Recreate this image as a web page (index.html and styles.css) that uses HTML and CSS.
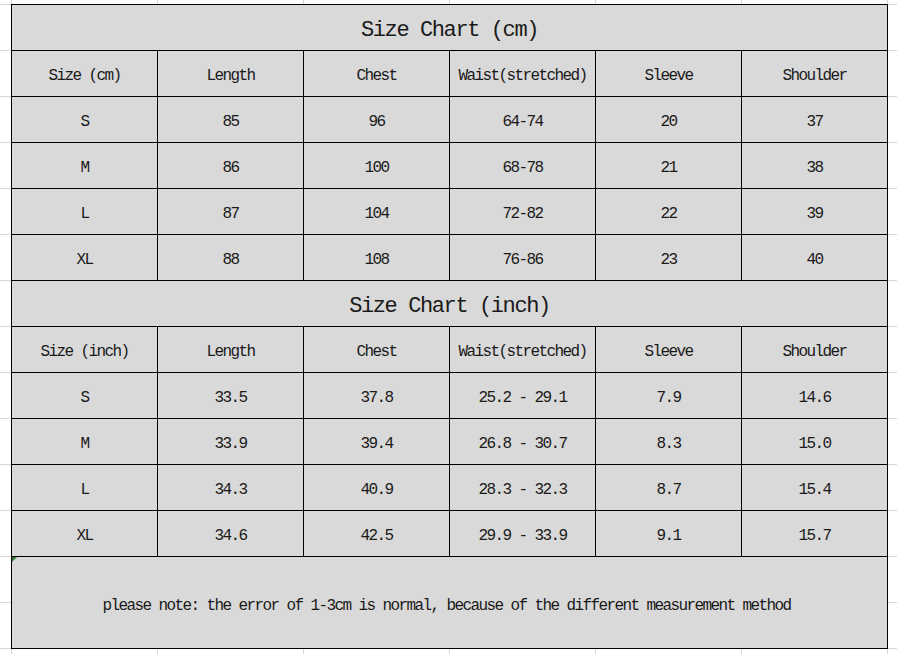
FILE: index.html
```html
<!DOCTYPE html>
<html>
<head>
<meta charset="utf-8">
<link rel="stylesheet" href="styles.css">
</head>
<body>
<div class="sheet">
  <div class="chart">
    <div class="cell title">Size Chart (cm)</div>

    <div class="cell">Size (cm)</div>
    <div class="cell">Length</div>
    <div class="cell">Chest</div>
    <div class="cell">Waist(stretched)</div>
    <div class="cell">Sleeve</div>
    <div class="cell">Shoulder</div>

    <div class="cell">S</div><div class="cell">85</div><div class="cell">96</div><div class="cell">64-74</div><div class="cell">20</div><div class="cell">37</div>
    <div class="cell">M</div><div class="cell">86</div><div class="cell">100</div><div class="cell">68-78</div><div class="cell">21</div><div class="cell">38</div>
    <div class="cell">L</div><div class="cell">87</div><div class="cell">104</div><div class="cell">72-82</div><div class="cell">22</div><div class="cell">39</div>
    <div class="cell">XL</div><div class="cell">88</div><div class="cell">108</div><div class="cell">76-86</div><div class="cell">23</div><div class="cell">40</div>

    <div class="cell title">Size Chart (inch)</div>

    <div class="cell">Size (inch)</div>
    <div class="cell">Length</div>
    <div class="cell">Chest</div>
    <div class="cell">Waist(stretched)</div>
    <div class="cell">Sleeve</div>
    <div class="cell">Shoulder</div>

    <div class="cell">S</div><div class="cell">33.5</div><div class="cell">37.8</div><div class="cell">25.2 - 29.1</div><div class="cell">7.9</div><div class="cell">14.6</div>
    <div class="cell">M</div><div class="cell">33.9</div><div class="cell">39.4</div><div class="cell">26.8 - 30.7</div><div class="cell">8.3</div><div class="cell">15.0</div>
    <div class="cell">L</div><div class="cell">34.3</div><div class="cell">40.9</div><div class="cell">28.3 - 32.3</div><div class="cell">8.7</div><div class="cell">15.4</div>
    <div class="cell">XL</div><div class="cell">34.6</div><div class="cell">42.5</div><div class="cell">29.9 - 33.9</div><div class="cell">9.1</div><div class="cell">15.7</div>

    <div class="cell note"><span class="marker"></span>please note: the error of 1-3cm is normal, because of the different measurement method</div>
  </div>
</div>
</body>
</html>
```

FILE: styles.css
```css
html, body {
  margin: 0;
  padding: 0;
  background: #ffffff;
}

.sheet {
  width: 897px;
  height: 654px;
  box-sizing: border-box;
  padding: 4px 0 0 11px;
  background-color: #ffffff;
  background-image:
    repeating-linear-gradient(to right, #d6d6d6 0 1px, transparent 1px 146px),
    repeating-linear-gradient(to bottom, #d6d6d6 0 1px, transparent 1px 46px);
  background-position: 11px 0, 0 4px;
  overflow: hidden;
}

.chart {
  display: grid;
  grid-template-columns: repeat(6, 146px);
  grid-auto-rows: 46px;
  width: max-content;
  border-top: 1px solid #000;
  border-left: 1px solid #000;
  background: #d9d9d9;
  font-family: "Liberation Mono", "DejaVu Sans Mono", monospace;
  color: #1a1a1a;
}

.cell {
  box-sizing: border-box;
  border-right: 1px solid #000;
  border-bottom: 1px solid #000;
  display: flex;
  align-items: center;
  justify-content: center;
  padding-top: 4px;
  font-size: 16px;
  letter-spacing: -1.6px;
  white-space: pre;
}

.title {
  grid-column: 1 / -1;
  font-size: 22px;
  letter-spacing: -1.4px;
  padding-top: 6px;
}

.note {
  grid-column: 1 / -1;
  grid-row: span 2;
  position: relative;
  padding-top: 6px;
  padding-right: 6px;
}

.marker {
  position: absolute;
  left: 0;
  top: 0;
  width: 0;
  height: 0;
  border-top: 5px solid #2e7d32;
  border-right: 5px solid transparent;
}
```
